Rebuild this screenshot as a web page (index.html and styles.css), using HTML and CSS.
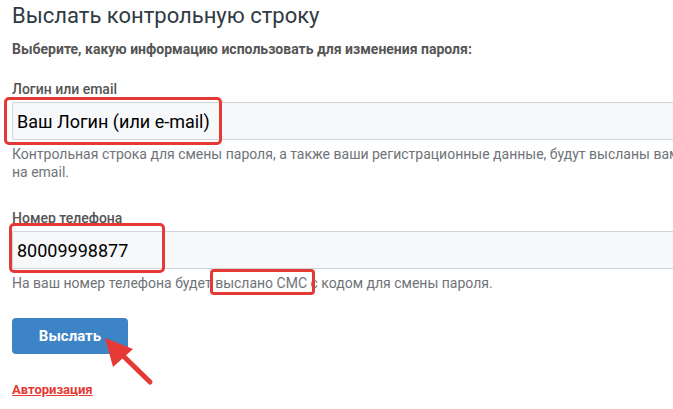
FILE: index.html
```html
<!DOCTYPE html>
<html lang="ru">
<head>
  <meta charset="UTF-8">
  <meta name="viewport" content="width=device-width, initial-scale=1.0">
  <title>Выслать контрольную строку</title>
  <link rel="stylesheet" href="styles.css">
</head>
<body>
  <div class="page">
    <h1>Выслать контрольную строку</h1>
    <p class="lead">Выберите, какую информацию использовать для изменения пароля:</p>

    <div class="field">
      <label for="login">Логин или email</label>
      <div class="input-wrap">
        <input type="text" id="login" value="Ваш Логин (или e-mail)">
        <span class="mark mark-login"></span>
      </div>
      <p class="hint">Контрольная строка для смены пароля, а также ваши регистрационные данные, будут высланы вам на email.</p>
    </div>

    <div class="field">
      <label for="phone">Номер телефона</label>
      <div class="input-wrap">
        <input type="text" id="phone" value="80009998877">
        <span class="mark mark-phone"></span>
      </div>
      <p class="hint">На ваш номер телефона будет <span class="marked">выслано СМС</span> с кодом для смены пароля.</p>
    </div>

    <div class="actions">
      <button type="button">Выслать</button>
      <svg class="arrow" width="60" height="60" viewBox="0 0 60 60">
        <line x1="53" y1="52" x2="16" y2="16" stroke="#e53935" stroke-width="5" stroke-linecap="round"/>
        <polygon points="8,8 36,19 16,37" fill="#e53935"/>
      </svg>
    </div>

    <div class="auth-row">
      <a href="#" class="auth">Авторизация</a>
    </div>
  </div>
</body>
</html>
```

FILE: styles.css
```css
body {
  margin: 0;
  font-family: Roboto, "Liberation Sans", sans-serif;
  background: #ffffff;
  overflow: hidden;
}
.page {
  width: 672px;
  padding: 2px 0 0 12px;
}
h1 {
  margin: 0;
  font-size: 22px;
  line-height: 28px;
  font-weight: 400;
  color: #2f3a42;
}
.lead {
  margin: 10px 0 0;
  font-size: 14px;
  line-height: 18px;
  font-weight: 700;
  color: #555;
}
.field {
  margin-top: 22px;
}
.field + .field {
  margin-top: 28px;
}
label {
  display: block;
  font-size: 14px;
  line-height: 18px;
  font-weight: 500;
  color: #555;
}
.input-wrap {
  position: relative;
  margin-top: 4px;
}
input {
  display: block;
  box-sizing: border-box;
  width: 100%;
  height: 38px;
  margin: 0;
  padding: 0 4px;
  border: 1px solid #cfd5dd;
  border-radius: 2px;
  background: #f7f8fa;
  font-family: Roboto, "Liberation Sans", sans-serif;
  font-size: 18px;
  color: #000;
}
.hint {
  margin: 5px 0 0;
  font-size: 14px;
  line-height: 18px;
  color: #6f7378;
}
.mark {
  position: absolute;
  border: 3px solid #e53935;
  border-radius: 5px;
  pointer-events: none;
}
.mark-login {
  left: -8px;
  top: -5px;
  width: 212px;
  height: 42px;
}
.mark-phone {
  left: -3px;
  top: -8px;
  width: 150px;
  height: 44px;
}
.marked {
  position: relative;
}
.marked::after {
  content: "";
  position: absolute;
  left: -5px;
  right: -8px;
  top: -6px;
  bottom: -4px;
  border: 3px solid #e53935;
  border-radius: 4px;
}
.actions {
  position: relative;
  display: flex;
  margin-top: 26px;
}
button {
  width: 116px;
  height: 36px;
  border: none;
  border-radius: 4px;
  background: #3d84c7;
  color: #fff;
  font-family: Roboto, "Liberation Sans", sans-serif;
  font-size: 15px;
  font-weight: 700;
  cursor: pointer;
}
.arrow {
  position: absolute;
  left: 85px;
  top: 12px;
}
.auth-row {
  margin-top: 28px;
  font-size: 13px;
  line-height: 16px;
}
.auth {
  font-weight: 700;
  color: #e53935;
}
```
